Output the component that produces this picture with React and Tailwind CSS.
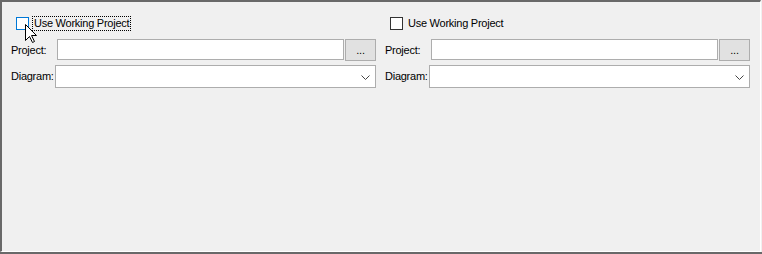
import React from 'react'

function Column({ focused }) {
  return (
    <div className="w-[365px] flex flex-col">
      {/* Checkbox row */}
      <div className="h-[15px] flex items-center pl-[5px] mt-[2px]">
        <div className={`shrink-0 w-[13px] h-[13px] bg-white border ${focused ? 'border-[#0078d7]' : 'border-[#333333]'}`} />
        <span className={`ml-[3px] h-[15px] leading-[13px] px-[1px] whitespace-nowrap ${focused ? 'border border-dotted border-black' : 'border border-transparent'}`}>
          Use Working Project
        </span>
      </div>

      {/* Project row */}
      <div className="flex items-start mt-[8px] h-[22px]">
        <span className="shrink-0 w-[46px] leading-[22px]">Project:</span>
        <div className="shrink-0 w-[287px] h-[21px] bg-white border border-[#adadad]" />
        <button className="shrink-0 ml-[1px] w-[31px] h-[22px] bg-[#e1e1e1] border border-[#adadad] leading-[14px] flex items-center justify-center">
          ...
        </button>
      </div>

      {/* Diagram row */}
      <div className="flex items-start mt-[4px] h-[23px]">
        <span className="shrink-0 w-[44px] leading-[23px] whitespace-nowrap">Diagram:</span>
        <div className="shrink-0 w-[321px] h-[23px] bg-white border border-[#adadad] flex items-center justify-end pr-[5px]">
          <svg width="9" height="5" viewBox="0 0 9 5" className="mt-[2px]">
            <path d="M0.5 0.5 L4.5 4.5 L8.5 0.5" fill="none" stroke="#444" strokeWidth="1" />
          </svg>
        </div>
      </div>
    </div>
  )
}

export default function App() {
  return (
    <div className="relative w-[762px] h-[254px] bg-[#f0f0f0] text-black text-[11px] tracking-[-0.25px]" style={{ fontFamily: '"Liberation Sans", Arial, sans-serif' }}>
      <div className="h-[252px] border-t-2 border-l-2 border-[#696969] border-b border-b-white border-r-[1px] border-r-white mr-[1px] flex gap-[9px] pl-[9px] pt-[12px]">
        <Column focused />
        <Column />
      </div>
      <div className="h-[2px] bg-[#696969]" />

      {/* Mouse cursor */}
      <svg className="absolute left-[25px] top-[24px]" width="13" height="20" viewBox="0 0 13 20">
        <path d="M0.5 0.5 L0.5 16.5 L4.5 12.5 L7.5 18.5 L9.5 17.5 L6.5 11.5 L11.5 11.5 Z" fill="white" stroke="black" strokeWidth="1" strokeLinejoin="miter" />
      </svg>
    </div>
  )
}
